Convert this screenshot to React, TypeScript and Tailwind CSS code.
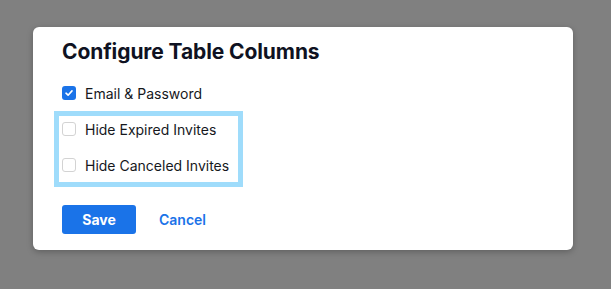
import { useState } from 'react'

type Column = { id: string; label: string; checked: boolean }

function Checkbox({ checked }: { checked: boolean }) {
  if (checked) {
    return (
      <span className="w-[14px] h-[14px] rounded-[3px] bg-[#1a73e8] flex items-center justify-center shrink-0">
        <svg width="10" height="10" viewBox="0 0 10 10" fill="none">
          <path d="M2 5.2 L4.1 7.2 L8 2.9" stroke="white" strokeWidth="1.6" strokeLinecap="round" strokeLinejoin="round" />
        </svg>
      </span>
    )
  }
  return <span className="w-[14px] h-[14px] rounded-[3px] border border-[#d3d3d3] bg-white shrink-0" />
}

function Row({ col }: { col: Column }) {
  return (
    <label className="flex items-center gap-[9px] h-[20px] text-[14px] text-[#16181d]">
      <Checkbox checked={col.checked} />
      <span>{col.label}</span>
    </label>
  )
}

export default function App() {
  const [cols] = useState<Column[]>([
    { id: 'email', label: 'Email & Password', checked: true },
    { id: 'expired', label: 'Hide Expired Invites', checked: false },
    { id: 'canceled', label: 'Hide Canceled Invites', checked: false },
  ])

  return (
    <div className="h-[289px] w-[611px] bg-[#808080] pt-[27px] pl-[33px] font-['Inter',sans-serif]">
      <div className="w-[540px] bg-white rounded-[6px] shadow-[0_2px_6px_rgba(0,0,0,0.25)] px-[29px] pt-[11px] pb-[16px]">
        <h2 className="text-[21px] leading-[28px] font-bold text-[#0f1222] tracking-[-0.1px]">Configure Table Columns</h2>

        <div className="mt-[17px]">
          <Row col={cols[0]} />
        </div>

        <div className="mt-[8px] -ml-[8px] w-[189px] border-[5px] border-[#9fdcfb] pl-[3px] pt-[3px] pb-[7px] flex flex-col gap-[16px]">
          <Row col={cols[1]} />
          <Row col={cols[2]} />
        </div>

        <div className="mt-[18px] flex items-center gap-[23px]">
          <button className="w-[74px] h-[29px] rounded-[3px] bg-[#1a73e8] text-white text-[14px] font-bold">Save</button>
          <button className="text-[14px] font-semibold text-[#1a73e8]">Cancel</button>
        </div>
      </div>
    </div>
  )
}
